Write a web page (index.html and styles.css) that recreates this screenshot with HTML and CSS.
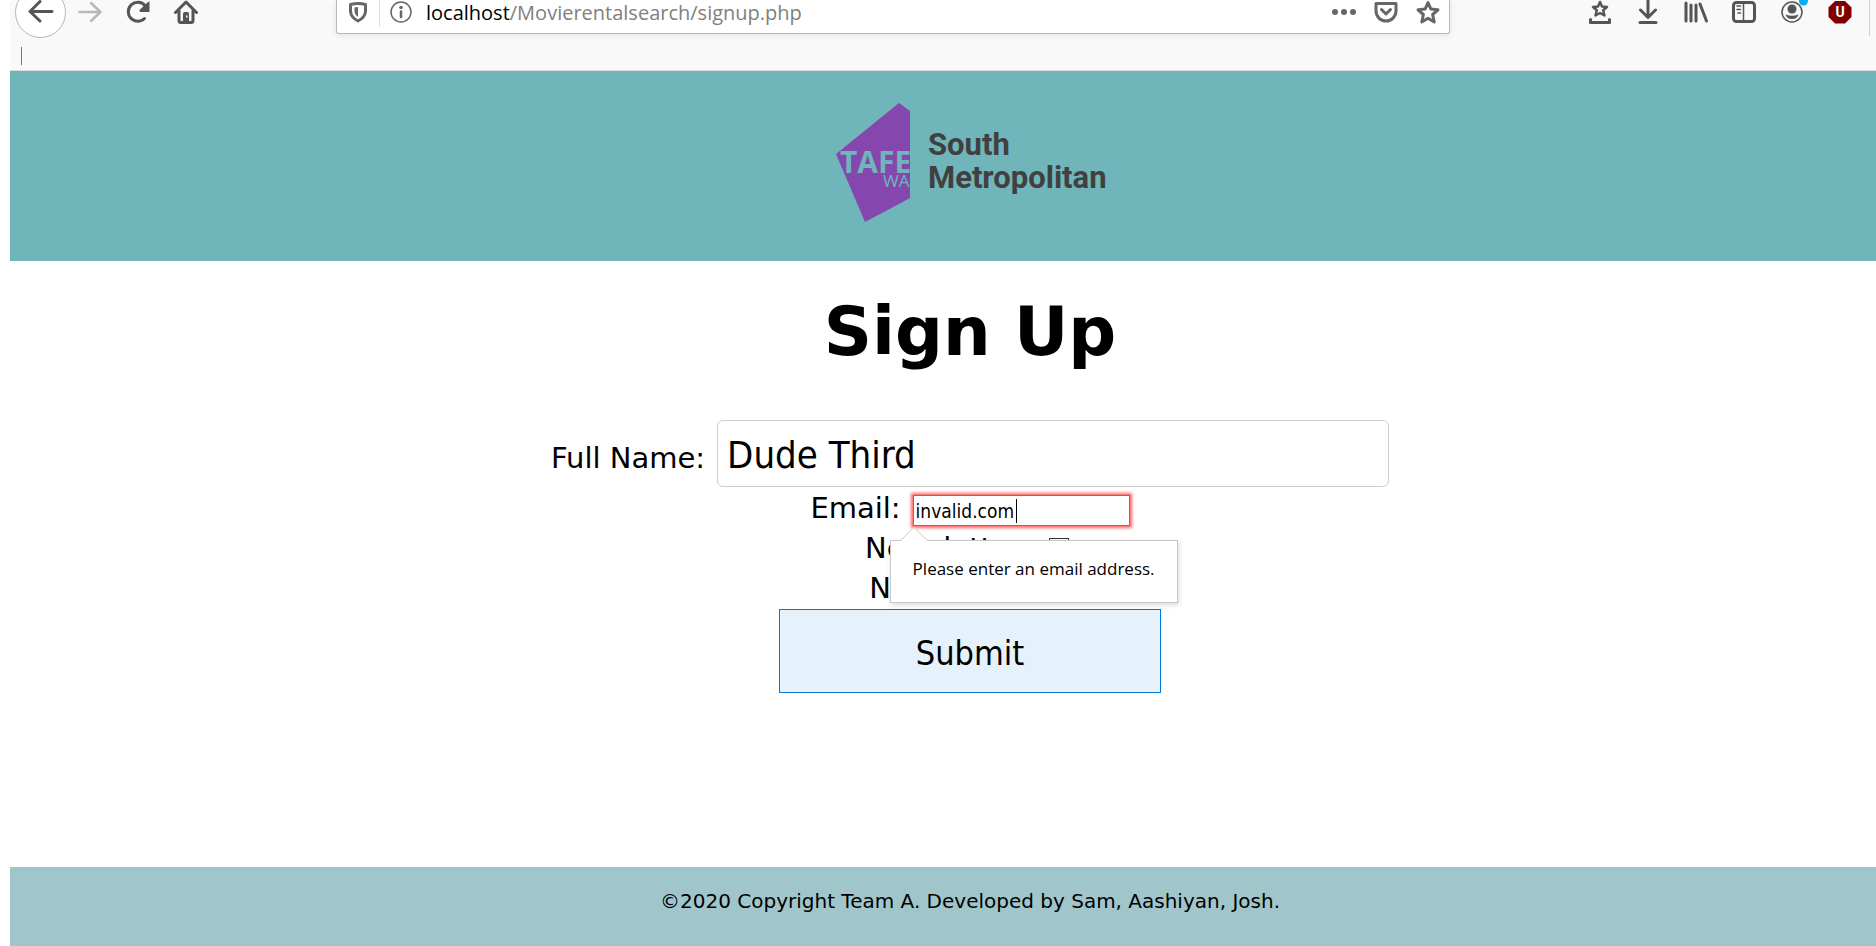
FILE: index.html
```html
<!DOCTYPE html>
<html lang="en">
<head>
<meta charset="utf-8">
<title>Sign Up</title>
<link rel="stylesheet" href="styles.css">
</head>
<body>
<div class="browser">
  <div class="toolbar">
    <nav class="tools" aria-label="Navigation">
      <button class="tool back" aria-label="Back"><svg class="icon" viewBox="0 0 24 24"><path class="line heavy" d="M23 11.500H1.500M11 1.500L1 11.500L11 21"/></svg></button>
      <button class="tool forward" aria-label="Forward"><svg class="icon" viewBox="0 0 24 24"><path class="line" d="M1.500 12H22.500M13 3L22.500 12L13 21"/></svg></button>
      <button class="tool" aria-label="Reload"><svg class="icon" viewBox="0 0 24 24"><path class="line heavy" d="M18.500 18.500A9.500 9.500 0 1 1 19 5.500L21 8"/><path class="solid" d="M23.500 2Q24 1 22 2L14 9.500Q12.500 12 15 12H23.500Z"/></svg></button>
      <button class="tool" aria-label="Home"><svg class="icon" viewBox="0 0 24 24"><path class="line heavy" d="M1.500 12.500L12 2L22.500 12.500M5 10.500V20.500Q5 22.500 7 22.500H17Q19 22.500 19 20.500V10.500"/><path class="solid" d="M9 23V13.500Q9 12 10.500 12H13.500Q15 12 15 13.500V23Z"/><path fill="#fff" d="M12 15.500h1.500v2H12z"/></svg></button>
    </nav>
    <div class="address">
      <button class="mini shield" aria-label="Tracking protection"><svg class="icon" viewBox="0 0 24 24"><path class="line heavy" d="M4.500 4.500Q12 2.500 19.500 4.500V11.500Q19 17.500 12 21Q5 17.500 4.500 11.500Z"/><path class="solid" d="M12 7V17Q8.500 14.500 8.500 11V7.500Z"/></svg></button>
      <button class="mini info" aria-label="Site information"><svg class="icon" viewBox="0 0 24 24"><circle class="line thin" cx="12" cy="12" r="10"/><circle class="solid" cx="12" cy="7.500" r="1.800"/><path class="line" d="M12 11.500V17"/></svg></button>
      <span class="url"><span class="host">localhost</span>/Movierentalsearch/signup.php</span>
      <button class="mini" aria-label="Page actions"><svg class="icon" viewBox="0 0 24 24"><circle class="solid" cx="3" cy="12" r="3"/><circle class="solid" cx="12" cy="12" r="3"/><circle class="solid" cx="21" cy="12" r="3"/></svg></button>
      <button class="mini" aria-label="Save to Pocket"><svg class="icon" viewBox="0 0 24 24"><path class="line heavy" d="M2 3.500H22V11A10 10 0 0 1 2 11Z"/><path class="line heavy" d="M7.500 9.500L12 14L16.500 9.500"/></svg></button>
      <button class="mini" aria-label="Bookmark"><svg class="icon" viewBox="0 0 24 24"><path class="line heavy" d="M12 2.500L14.900 9.100L22 9.800L16.600 14.500L18.200 22L12 18.200L5.800 22L7.400 14.500L2 9.800L9.100 9.100Z"/></svg></button>
    </div>
    <div class="tools">
      <button class="tool" aria-label="Show bookmarks"><svg class="icon" viewBox="0 0 24 24"><path class="line" d="M12 2L14 6.500L19 7L15.200 10.200L16.500 15.500L12 13L7.500 15.500L8.800 10.200L5 7L10 6.500Z"/><path class="line heavy" d="M2.500 19.500V22.500H21.500V19.500"/></svg></button>
      <button class="tool" aria-label="Downloads"><svg class="icon" viewBox="0 0 24 24"><path class="line heavy" d="M12 0V17M4.500 10L12 17.500L19.500 10M4 22.500H20"/></svg></button>
      <button class="tool" aria-label="Library"><svg class="icon" viewBox="0 0 24 24"><path class="line heavy" d="M2 3V21M7 5V21M12 5V21M16 4L22.500 21"/></svg></button>
      <button class="tool" aria-label="Sidebar"><svg class="icon" viewBox="0 0 24 24"><rect class="line heavy" x="1.500" y="2.500" width="21" height="19" rx="3"/><path class="line thin" d="M11.500 3V21M5 6H8.500M5 9.500H8.500M6 13H8.500"/></svg></button>
      <button class="tool" aria-label="Account"><svg class="icon" viewBox="0 0 24 24"><circle class="line thin" cx="12" cy="12" r="10"/><circle class="solid" cx="12" cy="9" r="4.500"/><path class="solid" d="M5.500 14.500Q12 17 18.500 14.500Q17 19 12 19Q7 19 5.500 14.500Z"/><circle fill="#00b0f6" cx="23.500" cy="1" r="4.500"/></svg></button>
      <button class="tool" aria-label="uBlock Origin"><svg class="icon" viewBox="0 0 24 24"><path fill="#800000" d="M7 1H17L23.500 7.500V17L17 23.500H7L.500 17V7.500Z"/><text class="badge" x="12" y="17" text-anchor="middle">U</text></svg></button>
    </div>
    <span class="edge"></span>
  </div>
  <div class="bookmarks"><span class="mark"></span></div>
</div>

<header class="banner">
  <svg class="logo" viewBox="0 0 270 122" role="img" aria-label="TAFE WA South Metropolitan">
    <defs><clipPath id="shape"><path d="M1 52L64 1L75 9V96L30 120Z"/></clipPath></defs>
    <path fill="#8547ad" d="M1 52L64 1L75 9V96L30 120Z"/>
    <g clip-path="url(#shape)"><text class="tafe" x="5" y="71">TAFE</text><text class="wa" x="48" y="85">WA</text></g>
    <text class="campus" x="93" y="53">South</text>
    <text class="campus" x="93" y="86">Metropolitan</text>
  </svg>
</header>

<main class="content">
  <h1 class="title">Sign Up</h1>
  <form class="form" novalidate>
    <div class="row name-row">
      <label for="name">Full Name:</label>
      <input class="name" id="name" type="text" value="Dude Third">
    </div>
    <div class="row email-row">
      <label for="email">Email:</label>
      <div class="field">
        <input class="email" id="email" type="email" value="invalid.com" aria-describedby="error">
        <span class="caret"></span>
        <div class="popup" id="error" role="alert">
          <svg class="pointer" viewBox="0 0 28 15"><path fill="#fff" d="M0 15V14L14 0L28 14V15Z"/><path fill="none" stroke="#c8c8c8" d="M0 14L14 .500L28 14"/></svg>
          Please enter an email address.
        </div>
      </div>
    </div>
    <div class="row tick-row">
      <label for="letter">Newsletter:</label>
      <input class="tick" id="letter" type="checkbox">
    </div>
    <div class="row tick-row">
      <label for="flash">Newsflash:</label>
      <input class="tick" id="flash" type="checkbox">
    </div>
    <button class="submit" type="submit">Submit</button>
  </form>
</main>

<footer class="footer">©2020 Copyright Team A. Developed by Sam, Aashiyan, Josh.</footer>
</body>
</html>
```
FILE: styles.css
```css
* { box-sizing: border-box; }

body {
  margin: 0;
  padding-left: 10px;
  min-height: 100vh;
  display: flex;
  flex-direction: column;
  overflow: hidden;
  background: #fff;
  color: #000;
  font-family: Verdana, "DejaVu Sans", sans-serif;
  font-size: 29px;
}

button { border: 0; padding: 0; background: none; }

/* Browser bar */
.browser {
  background: #f9f9fa;
  border-bottom: 1px solid #dcdcdc;
  overflow: hidden;
}
.toolbar {
  display: flex;
  align-items: flex-start;
  height: 36px;
  padding-left: 7px;
}
.tools { display: flex; align-items: center; height: 24px; }
.tool {
  flex: none;
  display: grid;
  place-items: center;
  width: 48px;
  height: 24px;
}
.back {
  width: 51px;
  height: 51px;
  margin: 0 0 0 -2px;
  border: 1px solid #b5b5b5;
  border-radius: 50%;
  background: #fff;
}
.tool { color: #555; }
.mini { color: #666; }
.tool.forward { color: #b8b8b8; }
.icon { display: block; width: 24px; height: 24px; overflow: visible; }
.line {
  fill: none;
  stroke: currentColor;
  stroke-width: 2.5;
  stroke-linecap: round;
  stroke-linejoin: round;
}
.heavy { stroke-width: 3; }
.thin { stroke-width: 1.5; }
.solid { fill: currentColor; }
.badge { fill: #fff; font: bold 14px Roboto, sans-serif; }

.address {
  flex: 1;
  display: flex;
  height: 34px;
  margin: 0 126px;
  border: 1px solid #b8b8b8;
  border-top: 0;
  border-radius: 0 0 3px 3px;
  background: #fff;
  box-shadow: 0 1px 6px rgba(0, 0, 0, .1);
}
.mini {
  display: grid;
  place-items: center;
  width: 42px;
  height: 24px;
}
.shield { width: 43px; height: 27px; padding-bottom: 3px; border-right: 1px solid #ddd; }
.url {
  flex: 1;
  padding-left: 4px;
  color: #808080;
  font-family: "Segoe UI", "Open Sans", sans-serif;
  font-size: 20px;
  line-height: 26px;
}
.host { color: #000; }
.edge { width: 1px; height: 36px; margin: 0 6px 0 5px; background: #d0d0d0; }
.bookmarks { height: 34px; padding: 11px; }
.mark { display: block; width: 1px; height: 18px; background: #777; }

/* Page */
.banner, .content, .footer { padding-left: 54px; text-align: center; }
.banner {
  display: flex;
  justify-content: center;
  padding-top: 31px;
  padding-bottom: 37px;
  background: #6fb5ba;
}
.logo { width: 270px; height: 122px; overflow: visible; }
.tafe { fill: #6fb5ba; font: bold 30px "Open Sans", sans-serif; }
.wa { fill: #6fb5ba; font: 17px "Open Sans", sans-serif; }
.campus { fill: #404040; font: bold 31px Roboto, sans-serif; }

.content { flex: 1; padding-top: 31px; }
.title { margin: 0 0 48px; font-size: 67px; line-height: 80px; }
.form { display: flex; flex-direction: column; align-items: center; }
.row {
  display: flex;
  align-items: baseline;
  gap: 12px;
  height: 40px;
  line-height: 38px;
}
.name-row { height: 67px; }
.email-row { height: 42px; line-height: 42px; }
.tick-row { align-items: flex-start; gap: 10px; }
.name, .email, .submit {
  font-family: Tahoma, "DejaVu Sans Condensed", sans-serif;
  color: #000;
}
.name {
  width: 672px;
  height: 67px;
  padding: 4px 9px 2px;
  border: 1px solid #ccc;
  border-radius: 6px;
  font-size: 38px;
}
.field { position: relative; }
.email {
  display: block;
  width: 217px;
  height: 31px;
  padding: 2px 2px 0;
  border: 1px solid #777;
  border-radius: 0;
  outline: 0;
  box-shadow: 0 0 3px 2px #f66;
  font-size: 19px;
}
.caret { position: absolute; top: 4px; left: 103px; width: 1px; height: 24px; background: #000; }
.popup {
  position: absolute;
  top: 45px;
  left: -23px;
  padding: 16px 22px 21px;
  border: 1px solid #c8c8c8;
  background: #fff;
  box-shadow: 1px 2px 5px rgba(0, 0, 0, .15);
  font-family: "Segoe UI", "Open Sans", sans-serif;
  font-size: 17px;
  line-height: 24px;
  white-space: nowrap;
}
.pointer { position: absolute; top: -14px; left: 9px; width: 28px; height: 15px; }
.tick {
  appearance: none;
  width: 20px;
  height: 20px;
  margin: 9px 6px 0 8px;
  border: 1px solid #333;
  background: #fff;
}
.submit {
  width: 382px;
  height: 84px;
  padding-top: 3px;
  border: 1px solid #0078d7;
  background: #e5f1fb;
  font-size: 34px;
}
.footer {
  height: 79px;
  padding-top: 22px;
  background: #a0c6cb;
  font-size: 20px;
  line-height: 24px;
}
```
